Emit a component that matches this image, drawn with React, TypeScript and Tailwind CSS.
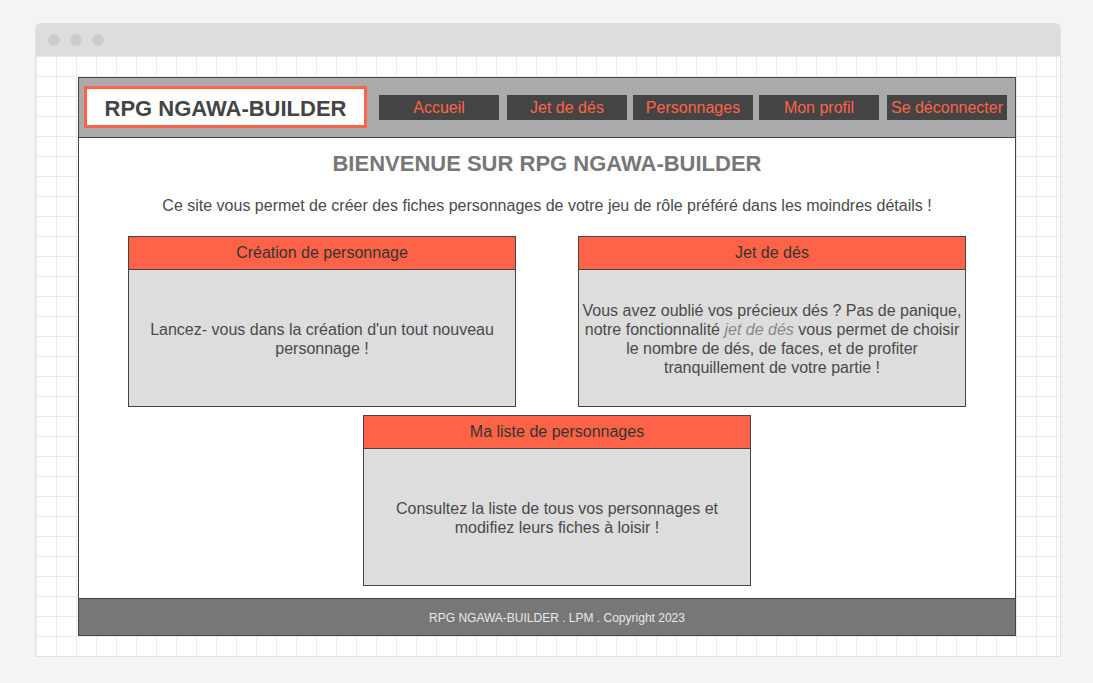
import React from "react";

const navItems = [
  { label: "Accueil", ml: "ml-[12px]" },
  { label: "Jet de dés", ml: "ml-[8px]" },
  { label: "Personnages", ml: "ml-[6px]" },
  { label: "Mon profil", ml: "ml-[6px]" },
  { label: "Se déconnecter", ml: "ml-[8px]" },
];

const Card = ({
  title,
  children,
}: {
  title: string;
  children: React.ReactNode;
}) => {
  return (
    <div className="w-[388px] h-[171px] border border-[#444] flex flex-col">
      <div className="h-[33px] bg-[#ff6347] border-b border-[#444] flex items-center justify-center text-[16px] text-[#333]">
        {title}
      </div>
      <div className="flex-1 bg-[#dddddd] flex items-center justify-center px-[3px] pt-[2px] text-center text-[16px] leading-[19px] text-[#4a4a4a]">
        <p>{children}</p>
      </div>
    </div>
  );
};

export default function App() {
  return (
    <div
      className="w-[1093px] h-[683px] bg-[#f4f4f4] pt-[23px] pl-[35px] overflow-hidden"
      style={{ fontFamily: '"Liberation Sans", Arial, sans-serif' }}
    >
      <div className="w-[1026px] h-[634px] flex flex-col rounded-t-[6px] overflow-hidden border-x border-b border-[#e2e2e2]">
        <div className="h-[33px] bg-[#dddddd] flex items-center gap-[10px] pl-[12px]">
          <span className="w-[12px] h-[12px] rounded-full bg-[#cccccc]" />
          <span className="w-[12px] h-[12px] rounded-full bg-[#cccccc]" />
          <span className="w-[12px] h-[12px] rounded-full bg-[#cccccc]" />
        </div>
        <div className="flex-1 bg-white bg-[linear-gradient(to_right,#ebebeb_1px,transparent_1px),linear-gradient(to_bottom,#ebebeb_1px,transparent_1px)] bg-[size:20px_20px] bg-[position:0px_0px] pl-[42px] pt-[21px]">
          <div className="w-[938px] h-[559px] border border-[#444] flex flex-col bg-white">
            {/* header */}
            <header className="h-[60px] bg-[#aaaaaa] border-b border-[#444] flex items-start pl-[5px] pt-[8px]">
              <div className="w-[283px] h-[42px] bg-white border-[3px] border-[#ff6347] flex items-center justify-center pt-[3px] text-[22px] font-bold text-[#444]">
                RPG NGAWA-BUILDER
              </div>
              {navItems.map((item) => (
                <div
                  key={item.label}
                  className={`${item.ml} mt-[9px] w-[120px] h-[25px] bg-[#444444] flex items-center justify-center whitespace-nowrap text-[16px] text-[#ff6347]`}
                >
                  {item.label}
                </div>
              ))}
            </header>

            {/* main */}
            <main className="flex-1 flex flex-col items-center">
              <h1 className="mt-[13px] text-[22px] leading-[26px] font-bold text-[#777]">
                BIENVENUE SUR RPG NGAWA-BUILDER
              </h1>
              <p className="mt-[19px] text-[16px] leading-[19px] text-[#4a4a4a]">
                Ce site vous permet de créer des fiches personnages de votre
                jeu de rôle préféré dans les moindres détails !
              </p>
              <div className="mt-[21px] w-full flex pl-[49px] gap-[62px]">
                <Card title="Création de personnage">
                  Lancez- vous dans la création d'un tout nouveau personnage !
                </Card>
                <Card title="Jet de dés">
                  Vous avez oublié vos précieux dés ? Pas de panique, notre
                  fonctionnalité{" "}
                  <em className="text-[#888]">jet de dés</em> vous permet de
                  choisir le nombre de dés, de faces, et de profiter
                  tranquillement de votre partie !
                </Card>
              </div>
              <div className="mt-[8px] w-full flex justify-center pl-[20px]">
                <Card title="Ma liste de personnages">
                  Consultez la liste de tous vos personnages et modifiez leurs
                  fiches à loisir !
                </Card>
              </div>
            </main>

            {/* footer */}
            <footer className="h-[37px] bg-[#777777] border-t border-[#444] flex items-center justify-center pl-[20px] pt-[2px] text-[12px] text-[#e8e8e8]">
              RPG NGAWA-BUILDER . LPM . Copyright 2023
            </footer>
          </div>
        </div>
      </div>
    </div>
  );
}
